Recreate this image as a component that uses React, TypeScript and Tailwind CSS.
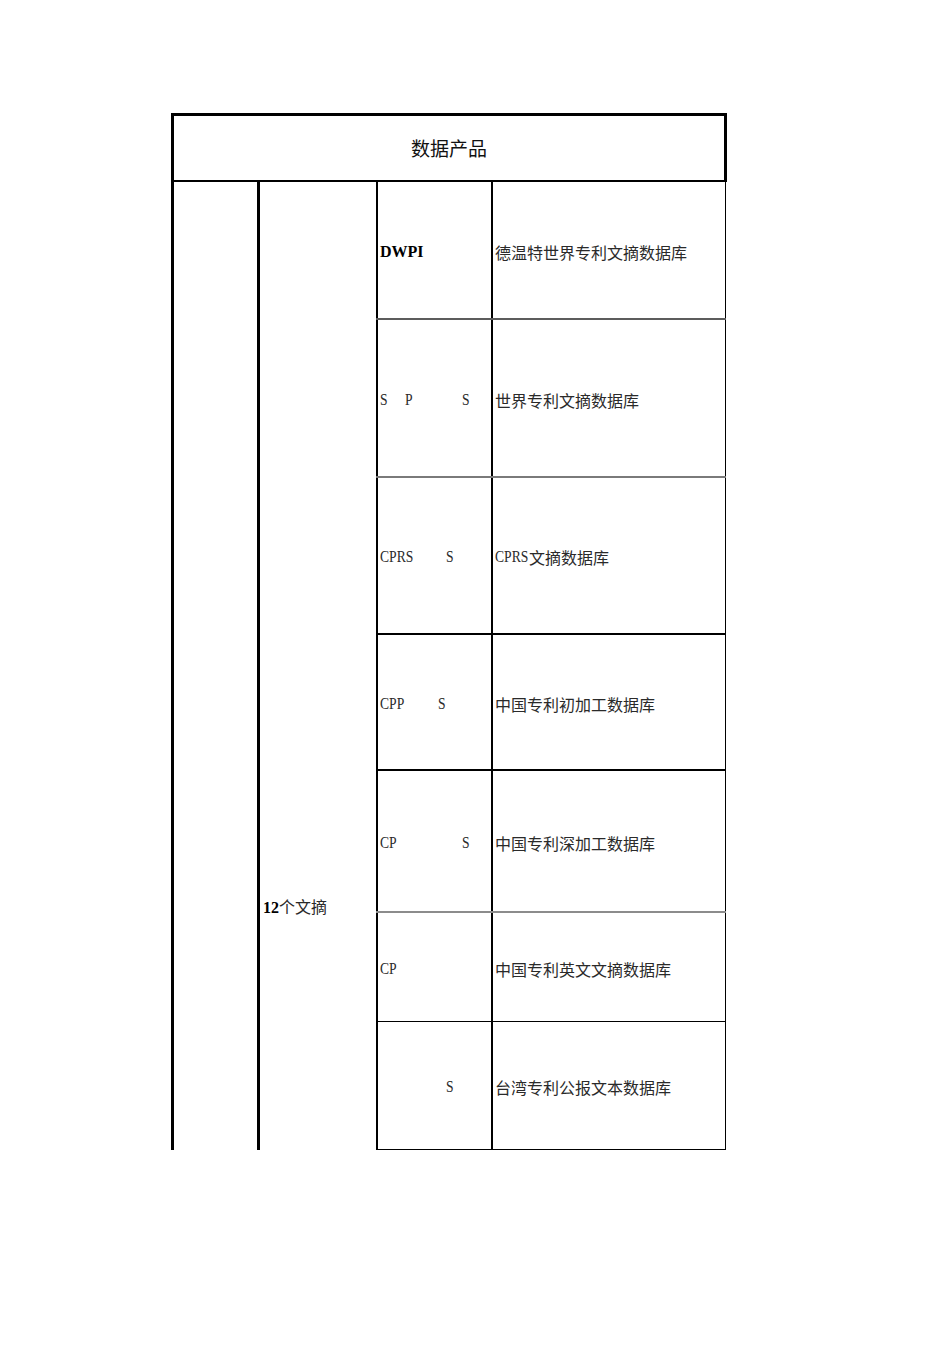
const serif = "font-['Liberation_Serif','Noto_Sans_CJK_SC',serif]";
const cjk = "font-['Noto_Sans_CJK_SC','Liberation_Sans',sans-serif]";

type Token = { text: string; box?: string };

interface Row {
  height: string;
  border: string;
  code: Token[];
  bold?: boolean;
  latin?: string;
  name: string;
}

const rows: Row[] = [
  {
    height: "h-[138px]",
    border: "border-b-2 border-b-[#5c5c5c]",
    code: [{ text: "DWPI" }],
    bold: true,
    name: "德温特世界专利文摘数据库",
  },
  {
    height: "h-[158px]",
    border: "border-b-2 border-b-[#7a7a7a]",
    code: [
      { text: "S", box: "w-[25px]" },
      { text: "P", box: "w-[57px]" },
      { text: "S" },
    ],
    name: "世界专利文摘数据库",
  },
  {
    height: "h-[157px]",
    border: "border-b-2 border-b-black",
    code: [{ text: "CPRS", box: "w-[66px]" }, { text: "S" }],
    latin: "CPRS",
    name: "文摘数据库",
  },
  {
    height: "h-[136px]",
    border: "border-b-2 border-b-black",
    code: [{ text: "CPP", box: "w-[58px]" }, { text: "S" }],
    name: "中国专利初加工数据库",
  },
  {
    height: "h-[142px]",
    border: "border-b-2 border-b-[#8c8c8c]",
    code: [{ text: "CP", box: "w-[82px]" }, { text: "S" }],
    name: "中国专利深加工数据库",
  },
  {
    height: "h-[109px]",
    border: "border-b border-b-black",
    code: [{ text: "CP" }],
    name: "中国专利英文文摘数据库",
  },
  {
    height: "h-[128px]",
    border: "border-b border-b-black",
    code: [{ text: "", box: "w-[66px]" }, { text: "S" }],
    name: "台湾专利公报文本数据库",
  },
];

function CodeCell({ row }: { row: Row }) {
  if (row.bold) {
    return (
      <span className={`${serif} text-[16px] font-bold text-black`}>
        {row.code[0].text}
      </span>
    );
  }
  return (
    <div className="flex">
      {row.code.map((t, i) => (
        <span key={i} className={`${t.box ?? ""} inline-block shrink-0`}>
          <span
            className={`${serif} inline-block origin-left scale-x-[0.8] text-[17px] text-[#2a2a2a]`}
          >
            {t.text}
          </span>
        </span>
      ))}
    </div>
  );
}

export default function App() {
  return (
    <div className="min-h-[1345px] w-[950px] bg-white pl-[171px] pt-[113px]">
      <div className="w-[556px]">
        <div className="flex h-[69px] items-center justify-center border-x-[3px] border-t-[3px] border-b-2 border-black">
          <span className={`${cjk} text-[19px] text-[#111]`}>数据产品</span>
        </div>

        <div className="flex w-[555px]">
          <div className="w-[86px] shrink-0 border-l-[3px] border-black" />

          <div className="w-[119px] shrink-0 border-l-[3px] border-black pl-[3px] pt-[713px]">
            <span className="leading-[20px]">
              <span className={`${serif} text-[16px] font-bold`}>12</span>
              <span className={`${cjk} text-[16px] text-[#2a2a2a]`}>个文摘</span>
            </span>
          </div>

          <div className="flex flex-1 flex-col">
            {rows.map((row, i) => (
              <div key={i} className={`flex ${row.height} ${row.border}`}>
                <div className="flex w-[115px] shrink-0 items-center border-l-2 border-black pl-[2px] pt-[3px]">
                  <CodeCell row={row} />
                </div>
                <div className="flex flex-1 items-center border-l-2 border-r border-black pl-[2px] pt-[3px]">
                  {row.latin && (
                    <span
                      className={`${serif} inline-block w-[34px] shrink-0`}
                    >
                      <span className="inline-block origin-left scale-x-[0.8] text-[17px] text-[#2a2a2a]">
                        {row.latin}
                      </span>
                    </span>
                  )}
                  <span className={`${cjk} text-[16px] text-[#2a2a2a]`}>
                    {row.name}
                  </span>
                </div>
              </div>
            ))}
          </div>
        </div>
      </div>
    </div>
  );
}
